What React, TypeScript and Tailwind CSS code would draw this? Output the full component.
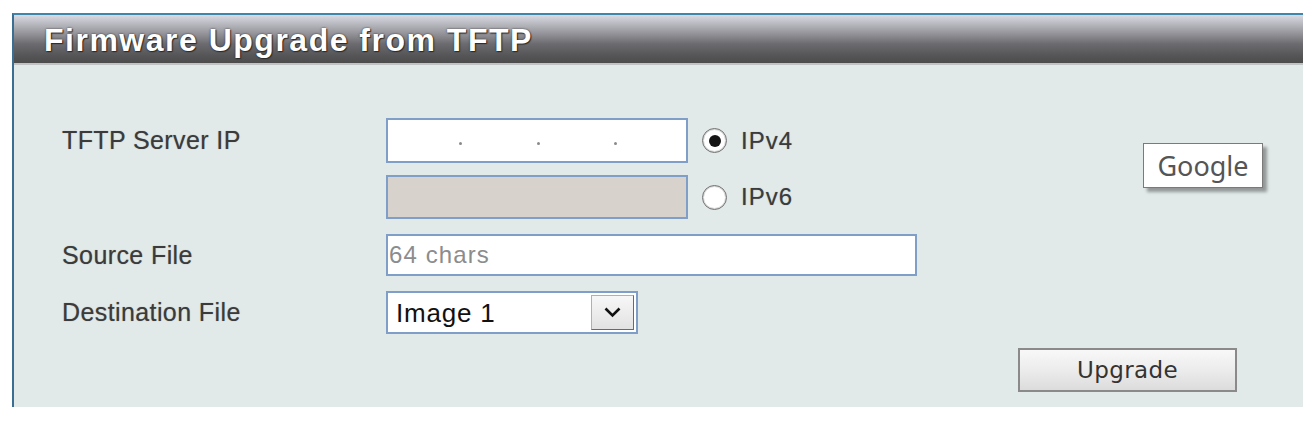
import React from 'react';

const LABEL =
  "font-['Liberation_Sans',Arial,sans-serif] text-[25px] tracking-[0.4px] text-[#3b3b3b] leading-none [text-shadow:0_0_1px_rgba(0,0,0,0.35)]";

const RADIO_TEXT =
  "ml-[14px] font-['Liberation_Sans',Arial,sans-serif] text-[24px] leading-none tracking-[1px] text-[#3b3b3b] [text-shadow:0_0_1px_rgba(0,0,0,0.35)]";

function Radio({ checked }: { checked?: boolean }) {
  return (
    <span className="ml-[14px] flex h-[25px] w-[25px] items-center justify-center rounded-full border-[1.5px] border-[#6f6f6f] bg-white shadow-[inset_0_0_0_1px_#d8d8d8]">
      {checked && <span className="h-[12px] w-[12px] rounded-full bg-[#151515]" />}
    </span>
  );
}

function IpDot() {
  return <span className="mt-[5px] h-[3px] w-[3px] rounded-full bg-[#8a8a8a]" />;
}

export default function App() {
  return (
    <div className="min-h-screen bg-white pt-[13px] pl-[12px]">
      <div className="relative w-[1291px] border-t-2 border-l-2 border-t-[#3f86ad] border-l-[#3a6f93] bg-[#e2e9e9]">
        {/* title bar */}
        <div className="flex h-[50px] items-center border-b-2 border-[#bfc3c3] bg-[linear-gradient(to_bottom,#dadae3_0%,#c8c8d0_10%,#9a9aa0_35%,#6c6c70_60%,#555557_85%,#4c4c4c_100%)] pl-[30px]">
          <h1 className="mt-[1px] font-['Liberation_Sans',Arial,sans-serif] text-[32px] font-bold leading-none tracking-[1.5px] text-white [text-shadow:0_0_2px_rgba(0,0,0,0.7),1px_1px_1px_#333]">
            Firmware Upgrade from TFTP
          </h1>
        </div>

        {/* form body */}
        <div className="flex flex-col pt-[53px] pb-[15px]">
          <div className="flex h-[45px] items-center">
            <div className={`w-[372px] pl-[48px] ${LABEL}`}>TFTP Server IP</div>
            <div className="flex h-[45px] w-[302px] items-center border-2 border-[#7f9fc8] bg-white pl-[71px]">
              <IpDot />
              <span className="w-[75px]" />
              <IpDot />
              <span className="w-[74px]" />
              <IpDot />
            </div>
            <Radio checked />
            <span className={RADIO_TEXT}>IPv4</span>
          </div>

          <div className="mt-[12px] flex h-[44px] items-center">
            <div className="w-[372px]" />
            <div className="h-[44px] w-[302px] border-2 border-[#7f9fc8] bg-[#d7d2cc]" />
            <Radio />
            <span className={RADIO_TEXT}>IPv6</span>
          </div>

          <div className="mt-[15px] flex h-[42px] items-center">
            <div className={`w-[372px] pl-[48px] ${LABEL}`}>Source File</div>
            <div className="flex h-[42px] w-[531px] items-center border-2 border-[#7f9fc8] bg-white pl-[1px] font-['Liberation_Sans',Arial,sans-serif] text-[24px] leading-none tracking-[1.1px] text-[#8c8c8c]">
              64 chars
            </div>
          </div>

          <div className="mt-[15px] flex h-[43px] items-center">
            <div className={`w-[372px] pl-[48px] ${LABEL}`}>Destination File</div>
            <div className="flex h-[43px] w-[252px] items-center justify-between border-2 border-[#7f9fc8] bg-white pl-[8px] pr-[2px]">
              <span className="font-['Liberation_Sans',Arial,sans-serif] text-[26px] leading-none tracking-[0.8px] text-[#111]">Image 1</span>
              <span className="flex h-[35px] w-[43px] items-center justify-center border border-t-[#b0b0b0] border-l-[#b0b0b0] border-r-[#6a6a6a] border-b-[#6a6a6a] bg-[linear-gradient(to_bottom,#f7f7f7,#e2e2e2)]">
                <svg width="17" height="11" viewBox="0 0 17 11" fill="none">
                  <path d="M1.5 1.5 L8.5 8.5 L15.5 1.5" stroke="#111" strokeWidth="2.6" />
                </svg>
              </span>
            </div>
          </div>

          <div className="mt-[14px] flex justify-end pr-[66px]">
            <button className="h-[44px] w-[219px] border-2 border-[#8a8a8a] bg-[linear-gradient(to_bottom,#f8f8f8_0%,#ececec_50%,#dcdcdc_100%)] font-['DejaVu_Sans',Verdana,sans-serif] text-[23px] leading-none tracking-[0.4px] text-[#333]">
              Upgrade
            </button>
          </div>
        </div>

        {/* tooltip overlay */}
        <div className="absolute left-[1129px] top-[128px] flex h-[45px] w-[120px] items-center justify-center border border-[#7a7a7a] bg-white shadow-[4px_4px_3px_rgba(0,0,0,0.35)]">
          <span className="font-['Noto_Sans','Open_Sans',sans-serif] text-[27px] leading-none text-[#555]">Google</span>
        </div>
      </div>
    </div>
  );
}
